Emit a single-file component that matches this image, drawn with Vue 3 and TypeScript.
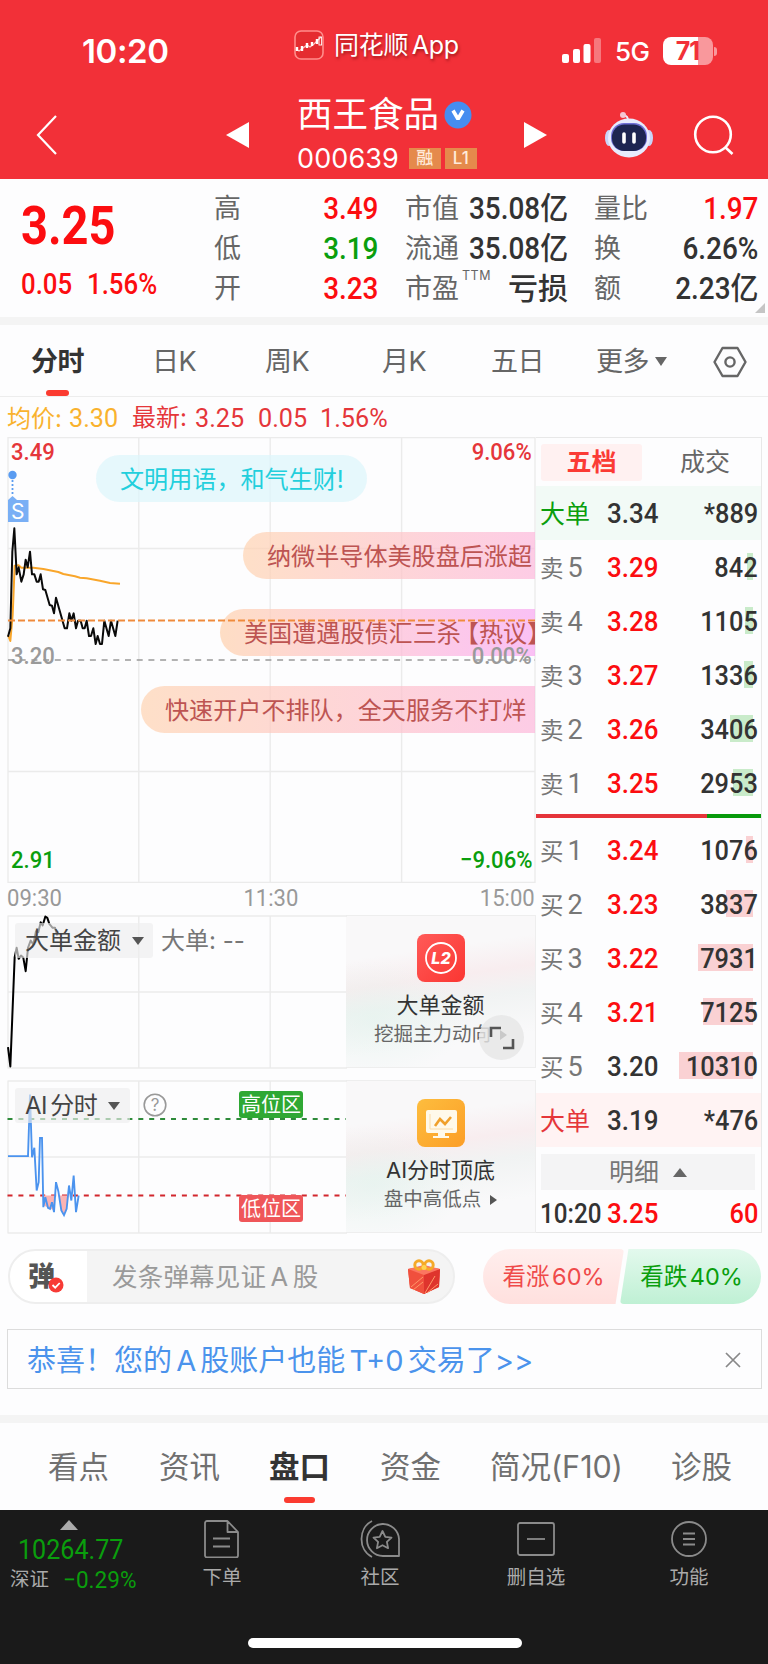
<script setup lang="ts">
interface Level { side: string; n: number; price: string; vol: string; bar: number; flat?: boolean }

const asks: Level[] = [
  { side: '卖', n: 5, price: '3.29', vol: '842', bar: 6 },
  { side: '卖', n: 4, price: '3.28', vol: '1105', bar: 8 },
  { side: '卖', n: 3, price: '3.27', vol: '1336', bar: 9 },
  { side: '卖', n: 2, price: '3.26', vol: '3406', bar: 23 },
  { side: '卖', n: 1, price: '3.25', vol: '2953', bar: 20 },
]
const bids: Level[] = [
  { side: '买', n: 1, price: '3.24', vol: '1076', bar: 7 },
  { side: '买', n: 2, price: '3.23', vol: '3837', bar: 27 },
  { side: '买', n: 3, price: '3.22', vol: '7931', bar: 55 },
  { side: '买', n: 4, price: '3.21', vol: '7125', bar: 50 },
  { side: '买', n: 5, price: '3.20', vol: '10310', bar: 74, flat: true },
]
const periods: string[] = ['分时', '日K', '周K', '月K', '五日']
const sections: string[] = ['看点', '资讯', '盘口', '资金', '简况(F10)', '诊股']

const priceLine = '24,605 31,580 37,350 43,280 50,418 56,397 64,440 71,418 77,374 83,397 90,350 96,418 103,418 110,440 116,440 122,418 129,463 136,465 149,510 156,512 162,535 168,488 194,580 201,580 208,535 214,557 221,535 228,580 234,557 242,557 248,580 254,580 260,557 267,603 273,603 280,580 287,627 293,603 300,627 306,627 313,557 326,603 333,557 346,603 353,557'
const avgLine = '24,600 31,618 38,540 44,392 56,391 64,398 100,398 130,402 160,408 175,411 190,417 225,424 240,428 260,430 300,437 330,444 360,446'
const bigLine = '24,920 31,978 44,650 50,622 56,655 63,645 70,652 77,692 84,622 92,600 100,612 108,572 115,575 122,545 128,555 136,528 142,532 148,550 158,562 165,562 172,585'
const aiLine = '24,1247 84,1247 90,1062 96,1250 103,1222 110,1350 116,1325 120,1192 126,1192 130,1400 136,1370 144,1402 150,1405 156,1385 162,1415 168,1325 175,1352 184,1410 192,1424 200,1405 207,1335 214,1380 221,1305 228,1415 236,1365'
</script>

<template>
  <div class="page">
    <header class="head">
      <div class="status">
        <span class="clock">10:20</span>
        <span class="appname">
          <svg class="logo" width="30" height="30" viewBox="0 0 30 30"><rect x="1" y="1" width="28" height="28" rx="6" fill="#e52c30" stroke="#ff8d8b" stroke-width="1.6" /><path d="M2 19l3 2 4-3 4-3 3 2 4-3 4-4 3-3" fill="none" stroke="#ffc5c0" stroke-width="1.2" /><path d="M3 17v4M8 16v5M13 13v5M18 12v4M23 9v5" stroke="#fff" stroke-width="2.4" /><rect x="25" y="7" width="2.6" height="8" fill="none" stroke="#fff" stroke-width=".9" /></svg>
          <span>同花顺 App</span>
        </span>
        <span class="radio">
          <svg width="40" height="26" viewBox="0 0 40 26" fill="#fff"><rect x="0" y="16" width="7" height="9" rx="2" /><rect x="11" y="11" width="7" height="14" rx="2" /><rect x="21.500" y="6" width="7" height="19" rx="2" /><rect x="32" y="0" width="7" height="25" rx="2" opacity=".35" /></svg>
          <span class="net">5G</span>
          <span class="battery">71</span><i class="cap"></i>
        </span>
      </div>
      <div class="nav">
        <svg class="back" width="24" height="42" viewBox="0 0 24 42"><path d="M21 2L3 21l18 19" fill="none" stroke="#fff" stroke-width="2.200" /></svg>
        <svg class="prev" width="23" height="26" viewBox="0 0 23 26"><path d="M23 0v26L0 13z" fill="#fff" /></svg>
        <div class="title">
          <div class="name">西王食品
            <svg width="28" height="28" viewBox="0 0 28 28"><circle cx="14" cy="14" r="13.500" fill="#468df0" /><path d="M9 9.500l5 8.500 5-8.500" fill="none" stroke="#fff" stroke-width="3.600" stroke-linejoin="bevel" /></svg>
          </div>
          <div class="code">000639<span class="tag rong">融</span><span class="tag">L1</span></div>
        </div>
        <svg class="next" width="23" height="26" viewBox="0 0 23 26"><path d="M0 0v26l23-13z" fill="#fff" /></svg>
        <svg class="robot" width="50" height="48" viewBox="0 0 50 48">
          <path d="M24 10c0-4-1-5-5-6" fill="none" stroke="#e9ecfb" stroke-width="2" /><circle cx="19" cy="4" r="3" fill="#f5c6d3" />
          <ellipse cx="5" cy="27" rx="4" ry="8" fill="#c9d4f8" /><ellipse cx="45" cy="27" rx="4" ry="8" fill="#c9d4f8" />
          <ellipse cx="25" cy="27" rx="21" ry="19.500" fill="#e7ebfd" /><rect x="7" y="12" width="36" height="28" rx="13" fill="#6f6fd6" /><rect x="8" y="13.500" width="34" height="26.500" rx="12.500" fill="#1d2551" />
          <path d="M20 23v8M30 23v8" stroke="#fff" stroke-width="3.600" stroke-linecap="round" />
        </svg>
        <svg class="search" width="42" height="42" viewBox="0 0 42 42" fill="none" stroke="#fff" stroke-width="2.600"><circle cx="20" cy="19.500" r="17.800" /><path d="M32 32l7.500 7" /></svg>
      </div>
    </header>

    <section class="quote">
      <div class="last">
        <b class="n">3.25</b>
        <div class="chg"><span class="n">0.05</span><span class="n">1.56%</span></div>
      </div>
      <div class="facts">
        <span>高</span><em class="n r up">3.49</em><span>市值</span><em class="n r">35.08亿</em><span>量比</span><em class="n r up">1.97</em>
        <span>低</span><em class="n r down">3.19</em><span>流通</span><em class="n r">35.08亿</em><span>换</span><em class="n r">6.26%</em>
        <span>开</span><em class="n r up">3.23</em><span>市盈<sup>TTM</sup></span><em class="r cjk">亏损</em><span>额</span><em class="n r">2.23亿</em>
      </div>
      <i class="corner"></i>
    </section>

    <nav class="periods">
      <span v-for="(p, i) in periods" :key="p" :class="{ on: i === 0 }">{{ p }}</span>
      <span class="more">更多<i></i></span>
      <svg width="34" height="32" viewBox="0 0 34 32" fill="none" stroke="#666" stroke-width="2.400" stroke-linejoin="round"><path d="M9.500 2h15L32.500 16l-8 14h-15L1.500 16z" /><circle cx="17" cy="16" r="4.600" /></svg>
    </nav>

    <div class="legend"><span class="avg">均价: <span class="n">3.30</span></span><span>最新:</span><span class="n">3.25</span><span class="n">0.05</span><span class="n">1.56%</span></div>

    <main class="board">
      <div class="charts">
        <div class="main-chart">
          <svg class="plot" width="529" height="446" viewBox="7 437 529 446" fill="none">
            <path d="M8 437.500H535.500M8 548.500H535M8 771.500H535M8 882.500H535M8 437v446M138.800 437v446M270.200 437v446M401.600 437v446M535 437v446" stroke="#ebebeb" stroke-width="1.400" />
            <path d="M8 660H535" stroke="#999" stroke-width="1.500" stroke-dasharray="6 5.700" />
          </svg>
          <div class="pill p1">文明用语，和气生财!</div>
          <div class="pill p2">纳微半导体美股盘后涨超</div>
          <div class="pill p3">美国遭遇股债汇三杀<span>【热议】</span></div>
          <div class="pill p4">快速开户不排队，全天服务不打烊</div>
          <svg class="plot" width="529" height="446" viewBox="7 437 529 446" fill="none">
            <g transform="translate(0 435) scale(.33333)" stroke-width="6" stroke-linejoin="round"><polyline :points="avgLine" stroke="#f9a62b" /><polyline :points="priceLine" stroke="#0a0a0a" /></g>
            <path d="M8 620.500H535" stroke="#f08b3c" stroke-width="1.900" stroke-dasharray="7 3" />
            <circle cx="12.500" cy="475" r="4.200" fill="#5a9cf1" /><path d="M12.500 480v15" stroke="#5a9cf1" stroke-width="1.800" stroke-dasharray="2 2" /><path d="M8 500l4.500-4 4.500 4h11.500v22H8z" fill="#79aff5" />
          </svg>
          <span class="s">S</span>
          <span class="n ax tl up2">3.49</span><span class="n ax tr up2">9.06%</span>
          <span class="n ax ml">3.20</span><span class="n ax mr">0.00%</span>
          <span class="n ax bl">2.91</span><span class="n ax br">−9.06%</span>
        </div>
        <div class="times"><span class="n">09:30</span><span class="n">11:30</span><span class="n">15:00</span></div>

        <div class="sub">
          <svg class="plot" width="340" height="154" viewBox="7 914.500 340 154" fill="none">
            <path d="M8 915.500H347M8 991.500H346M8 1067.500H347M8 915v153M138.800 915v153M270.200 915v153" stroke="#ebebeb" stroke-width="1.400" />
            <polyline transform="translate(0 740) scale(.33333)" :points="bigLine" stroke="#000" stroke-width="6" stroke-linejoin="round" />
          </svg>
          <span class="pick">大单金额<i></i></span><span class="note">大单: --</span>
          <div class="promo">
            <svg width="48" height="48" viewBox="0 0 48 48"><defs><linearGradient id="lr" x2="1" y2="1"><stop stop-color="#ff5a58" /><stop offset="1" stop-color="#fb3632" /></linearGradient></defs><rect width="48" height="48" rx="8" fill="url(#lr)" /><circle cx="24" cy="24" r="15" fill="none" stroke="#fff" stroke-width="1.800" /><text x="24" y="30" text-anchor="middle" class="l2">L2</text></svg>
            <b>大单金额</b><small>挖掘主力动向<i></i></small>
          </div>
          <span class="expand"><svg width="26" height="24" viewBox="0 0 26 24" fill="none" stroke="#555" stroke-width="2.600"><path d="M2 11V2h10M24 13v9H14" /></svg></span>
        </div>

        <div class="sub second">
          <svg class="plot" width="340" height="154" viewBox="7 1079.500 340 154" fill="none">
            <path d="M8 1080.500H347M8 1156.500H346M8 1232.500H347M8 1080v153M138.800 1080v153M270.200 1080v153" stroke="#ebebeb" stroke-width="1.400" />
            <path d="M7.500 1118.400H346" stroke="#2e8b3a" stroke-width="2" stroke-dasharray="5 5.900" /><path d="M7.500 1195H346" stroke="#d2272d" stroke-width="2" stroke-dasharray="5 5.900" />
            <g transform="translate(0 740) scale(.33333)"><path d="M128 1365l4 30 12 7 8 3 10 5 2-45zM176 1365l8 45 8 14 8-19 6-40z" fill="#fbb3b3" /><polyline :points="aiLine" stroke="#4b93ee" stroke-width="5.600" /></g>
          </svg>
          <span class="pick ai">AI 分时<i></i></span>
          <svg class="help" width="24" height="24" viewBox="0 0 24 24"><circle cx="12" cy="12" r="10.800" fill="none" stroke="#999" stroke-width="1.600" /><text x="12" y="18" text-anchor="middle">?</text></svg>
          <span class="zone hi">高位区</span><span class="zone lo">低位区</span>
          <div class="promo">
            <svg width="48" height="48" viewBox="0 0 48 48"><defs><linearGradient id="lo" x2="1" y2="1"><stop stop-color="#fdbd3e" /><stop offset="1" stop-color="#fc9e27" /></linearGradient></defs><rect width="48" height="48" rx="8" fill="url(#lo)" /><rect x="9" y="11" width="31" height="23" rx="2" fill="#fff9ea" /><path d="M21 34h7v3h4v2H16v-2h5z" fill="#fff9ea" /><path d="M13 15v15h23" fill="none" stroke="#fbdca8" /><path d="M18 27l5-7 5 5 6-7" fill="none" stroke="#f0a02b" stroke-width="2.600" /></svg>
            <b>AI分时顶底</b><small>盘中高低点<i></i></small>
          </div>
        </div>
      </div>

      <aside class="book">
        <div class="btabs"><b>五档</b><span>成交</span></div>
        <div class="row big g"><span class="who">大单</span><em class="n">3.34</em><em class="n r">*889</em></div>
        <div v-for="l in asks" :key="'a' + l.n" class="row"><span class="who">{{ l.side }}<u>{{ l.n }}</u></span><em class="n up">{{ l.price }}</em><em class="n r">{{ l.vol }}</em><i class="bar gb" :style="{ width: l.bar + 'px' }"></i></div>
        <div class="ratio"><i></i></div>
        <div v-for="l in bids" :key="'b' + l.n" class="row"><span class="who">{{ l.side }}<u>{{ l.n }}</u></span><em class="n" :class="{ up: !l.flat }">{{ l.price }}</em><em class="n r">{{ l.vol }}</em><i class="bar rb" :style="{ width: l.bar + 'px' }"></i></div>
        <div class="row big p"><span class="who">大单</span><em class="n">3.19</em><em class="n r">*476</em></div>
        <div class="detail">明细<i></i></div>
        <div class="row tick"><em class="n at">10:20</em><em class="n up">3.25</em><em class="n r up">60</em></div>
      </aside>
    </main>

    <section class="social">
      <div class="talk">
        <span class="dan">弹<svg width="16" height="16" viewBox="0 0 16 16"><circle cx="8" cy="8" r="7.500" fill="#f73b36" /><path d="M4.500 8l2.700 2.700L11.700 6" fill="none" stroke="#fff" stroke-width="1.800" /></svg></span>
        <span class="hint">发条弹幕见证 A 股</span>
        <svg class="gift" width="32" height="36" viewBox="0 0 32 36"><path d="M0 10l16-3 16 3-1 18-15 7L2 29z" fill="#ee4738" /><path d="M0 10l16 5v20L2 29z" fill="#f0503d" /><path d="M16 15l16-5-1 18-15 7z" fill="#df342d" /><path d="M0 10l16-4 16 4-16 6z" fill="#fb7660" /><path d="M3 28l12-10M5 31l10-8M17 34l10-17M19 34l11-9" stroke="#ff9868" stroke-width="1" /><g fill="none" stroke="#f5a928" stroke-width="3"><circle cx="11" cy="6" r="4.200" /><circle cx="21" cy="6" r="4.200" /></g><circle cx="16" cy="8.500" r="2.500" fill="#ffd34f" /></svg>
      </div>
      <div class="votes"><span class="bull">看涨 60%</span><span class="bear">看跌 40%</span></div>
    </section>

    <div class="notice"><span>恭喜！您的 A 股账户也能 T+0 交易了&gt;&gt;</span><svg width="16" height="16" viewBox="0 0 16 16"><path d="M1 1l14 14M15 1L1 15" stroke="#888" stroke-width="1.700" /></svg></div>

    <nav class="sections"><span v-for="s in sections" :key="s" :class="{ on: s === '盘口' }">{{ s }}</span></nav>

    <footer class="foot">
      <div class="index"><i></i><b class="n">10264.77</b><div><span>深证</span><em class="n">−0.29%</em></div></div>
      <div class="act"><svg width="40" height="38" viewBox="0 0 40 38"><path d="M5 1h20.500L36 12v23.500a2 2 0 0 1-2 2H5a2 2 0 0 1-2-2V3a2 2 0 0 1 2-2zM25.500 1v11H36M11 18.500h17M11 26.500h17" /></svg>下单</div>
      <div class="act"><svg width="42" height="38" viewBox="0 0 42 38"><path d="M13 1C-1 8-1 30 13 37M40 36V19A16 16 0 1 0 24 36zM23.500 11l2.800 5.800 6.200.8-4.600 4.300 1.200 6.300-5.600-3-5.600 3 1.200-6.300-4.600-4.300 6.200-.8z" /></svg>社区</div>
      <div class="act"><svg width="40" height="38" viewBox="0 0 40 38"><rect x="2" y="3" width="36" height="32" rx="2" /><path d="M11 19h18" /></svg>删自选</div>
      <div class="act"><svg width="40" height="38" viewBox="0 0 40 38"><circle cx="20" cy="19" r="17" /><path d="M14 13.500h12M14 19h12M14 24.500h12" /></svg>功能</div>
      <i class="home"></i>
    </footer>
  </div>
</template>

<style>
body { margin: 0; background: #fff; }
</style>

<style scoped>
* { box-sizing: border-box; }
i, em { font-style: normal; }
svg { display: block; flex: none; }
.page { width: 768px; height: 1664px; overflow: hidden; background: #fdfdfe; font-family: Inter, "Noto Sans CJK SC", sans-serif; color: #666; line-height: 1; white-space: nowrap; }
.n { display: inline-block; font-family: Roboto, "Noto Sans CJK SC", sans-serif; font-weight: 500; transform: scaleX(.91); transform-origin: left center; }
.r { justify-self: end; transform-origin: right center; }
.up { color: #fc0d10 !important; }
.down { color: #0a9e0d !important; }

.head { height: 179px; background: #f23038; color: #fff; }
.status { height: 90px; display: flex; position: relative; }
.clock { width: 212px; margin: 35px 0 0 82px; font-size: 33px; font-weight: 600; letter-spacing: -.4px; }
.appname { width: 268px; height: 30px; margin-top: 30px; display: flex; align-items: center; gap: 10px; font-size: 25px; letter-spacing: -.3px; word-spacing: -3px; text-shadow: 1px 2px 3px rgba(80, 0, 0, .5); }
.radio { height: 28px; margin-top: 37px; display: flex; align-items: center; }
.net { margin-left: 13px; width: 48px; padding-top: 2px; font-size: 26px; font-weight: 500; letter-spacing: -.5px; }
.battery { width: 50px; height: 28px; border-radius: 8px; background: linear-gradient(90deg, #fff 71%, #f9989c 71%); color: #f23038; font-size: 25px; font-weight: 700; line-height: 28px; text-align: center; letter-spacing: -1px; padding-right: 1px; }
.cap { width: 3px; height: 9px; margin-left: 1px; border-radius: 0 3px 3px 0; background: #f9989c; }
.nav { display: flex; height: 89px; }
.back { margin: 24px 0 0 35px; }
.prev { margin: 32px 0 0 167px; }
.title { width: 227px; margin-left: 48px; }
.name { display: flex; align-items: center; gap: 5px; height: 44px; margin-top: 3px; font-size: 35.500px; }
.code { display: flex; align-items: center; height: 28px; margin-top: 7px; font-size: 27px; letter-spacing: .1px; }
.tag { width: 32px; height: 21px; margin-left: 4px; background: #e58a4c; color: #ffeada; font-size: 17px; line-height: 21px; text-align: center; font-weight: 500; }
.rong { margin-left: 10px; }
.next { margin: 32px 0 0; }
.robot { margin: 21px 0 0 57px; }
.search { margin: 25px 0 0 39px; }

.quote { height: 146px; display: flex; position: relative; border-bottom: 8px solid #f4f4f4; }
.last { width: 214px; padding: 20px 0 0 21px; color: #fc0d10; }
.last > b { font-size: 54px; font-weight: 700; transform: scaleX(.87); height: 54px; }
.chg { display: flex; margin-top: 17px; font-size: 29px; }
.chg .n { width: 66px; transform: scaleX(.89); }
.facts { display: grid; grid-template-columns: 27px 137px 80px 110px 80px 110px; grid-template-rows: 40px 40px 40px; align-items: center; padding-top: 9px; font-size: 27px; }
.facts span:nth-of-type(3n+2) { padding-left: 27px; }
.facts span:nth-of-type(3n) { padding-left: 26px; }
.facts em { color: #333; font-size: 31px; }
.facts .n { transform: scaleX(.9); }
.facts .cjk { font-size: 30px; font-weight: 500; }
.facts sup { position: absolute; margin-top: -5px; margin-left: 3px; font-size: 12.500px; letter-spacing: .5px; }
.corner { position: absolute; right: 3px; bottom: 4px; border-left: 10px solid transparent; border-bottom: 10px solid #c5c5c5; }

.periods { height: 72px; padding: 2px 0 0 31px; display: grid; grid-template-columns: 121px 113px 117px 109px 105px 116px 40px; align-items: center; border-bottom: 1px solid #ededed; font-size: 27px; letter-spacing: -.4px; }
.periods span { position: relative; }
.periods svg { margin-left: 1px; }
.periods .on, .sections .on { color: #333; font-weight: 700; }
.periods .on::after { content: ""; position: absolute; left: 15px; top: 42px; width: 23px; height: 6px; border-radius: 3px; background: #fb3b30; }
.more { display: flex; align-items: center; }
.more i { margin-left: 6px; border: 6.500px solid transparent; border-top: 9px solid #666; border-bottom: 0; }

.legend { height: 40px; padding: 1px 0 0 7px; display: flex; align-items: center; font-size: 24px; color: #e5363a; }
.legend .n { font-size: 26px; font-weight: 400; width: 62.500px; transform: scaleX(.97); }
.legend .avg { width: 125px; color: #f9b22e; }
.legend > span:nth-child(2) { width: 63px; }

.board { height: 796px; margin-left: 7px; display: flex; }
.charts { width: 529px; }
.main-chart { position: relative; height: 446px; overflow: hidden; }
.plot { position: absolute; left: 0; top: 0; }
.pill { position: absolute; height: 47px; line-height: 49px; font-size: 24.100px; padding-left: 24px; border-radius: 24px 0 0 24px; color: #bd5452; right: 1px; overflow: hidden; background: linear-gradient(90deg, rgba(255, 211, 177, .7), rgba(253, 183, 219, .7)); }
.p1 { left: 89px; right: auto; width: 271px; top: 18px; border-radius: 24px; color: #23cfdc; background: rgba(222, 246, 251, .75); }
.p2 { left: 236px; top: 95px; }
.p3 { left: 213px; top: 172px; background: linear-gradient(90deg, rgba(255, 211, 177, .75), rgba(253, 183, 219, .7) 65%, rgba(248, 160, 240, .65)); }
.p3 span { margin-left: -6px; }
.p4 { left: 134px; top: 249px; }
.s { position: absolute; left: 4px; top: 64px; font-size: 21px; color: #fff; }
.ax { position: absolute; font-size: 24.500px; color: #999; transform: scaleX(.9); }
.up2 { color: #e5363a; }
.tl, .ml, .bl { left: 4px; }
.tr, .mr, .br { right: 4px; transform-origin: right center; }
.tl, .tr { top: 3px; }
.ml, .mr { top: 207px; color: #9a9a9a; }
.bl, .br { top: 411px; color: #0a9e0d; }
.times { height: 32px; display: flex; justify-content: space-between; align-items: center; font-size: 24px; color: #999; }
.times .n { font-weight: 400; transform: scaleX(.92); padding-bottom: 3px; }
.times .n:nth-child(2) { transform-origin: center; margin-left: -1px; }
.times .n:last-child { transform-origin: right; margin-right: 1px; }
.sub { position: relative; height: 153px; display: flex; justify-content: flex-end; }
.second { margin-top: 12px; }
.pick { position: absolute; left: 8px; top: 8px; width: 138px; height: 35px; padding: 1px 0 0 10px; display: flex; align-items: center; background: rgba(238, 238, 238, .65); border-radius: 3px; color: #444; font-size: 24px; }
.pick i { margin-left: 11px; border: 6.500px solid transparent; border-top: 8px solid #555; border-bottom: 0; }
.pick.ai { width: 115px; letter-spacing: -.5px; word-spacing: -3px; }
.note { position: absolute; left: 154px; top: 14px; font-size: 24px; color: #777; }
.help { position: absolute; left: 136px; top: 13px; }
.help text { font-size: 17px; fill: #999; }
.zone { position: absolute; left: 232px; width: 64px; height: 27px; line-height: 29px; border-radius: 3px; text-align: center; color: #fff; font-size: 20px; }
.hi { top: 11px; background: #2fa834; }
.lo { top: 115px; background: #ef5659; }
.promo { width: 190px; height: 153px; padding-top: 18px; display: flex; flex-direction: column; align-items: center; border: 1px solid #eee; border-left: 0; background: radial-gradient(ellipse at 15% 68%, rgba(225, 243, 236, .55), transparent 40%), linear-gradient(172deg, #f9f8f9 25%, #f8edef 42%, #f1f3f3 56%, #f9f9fa 80%); }
.promo b { margin-top: 12px; font-size: 22px; font-weight: 400; color: #333; }
.promo small { display: flex; align-items: center; margin-top: 9px; font-size: 19.500px; }
.promo small i { margin-left: 9px; border: 5px solid transparent; border-left: 7px solid #555; border-right: 0; }
.l2 { font-size: 16px; font-weight: 800; font-style: italic; fill: #fff; }
.expand { position: absolute; left: 472px; top: 100px; width: 45px; height: 45px; border-radius: 50%; background: rgba(230, 230, 230, .8); display: flex; align-items: center; justify-content: center; }

.book { width: 226px; border: 1px solid #e8e8e8; border-left: 0; font-size: 25px; }
.btabs { height: 48px; display: flex; align-items: center; padding-left: 5px; }
.btabs b { width: 101px; height: 37px; line-height: 36px; text-align: center; background: #fff1f1; color: #fb3b35; border-radius: 3px; }
.btabs span { margin-left: 38px; font-size: 25px; }
.row { position: relative; height: 54px; display: grid; grid-template-columns: 67px 60px 91px; align-items: center; padding: 2px 0 0 4px; }
.row em { position: relative; z-index: 1; font-size: 28.500px; color: #333; }
.row .r { transform: scaleX(.89); }
.who { font-size: 23.500px; color: #777; }
.who u { text-decoration: none; font-size: 27px; margin-left: 4px; font-family: Roboto; }
.big .who { font-size: 25px; }
.g { background: #f2faf6; }
.g .who { color: #0a9e0d; }
.p { background: #fff3f3; }
.p .who { color: #e5363a; }
.bar { position: absolute; right: 8px; top: 13px; height: 27px; }
.gb { background: #c9ebca; }
.rb { background: #fad1d3; }
.ratio { height: 4px; margin: 4px 0 5px; background: #089a0b; }
.ratio i { display: block; width: 171px; height: 4px; background: #e5343a; }
.detail { height: 36px; margin: 7px 6px 0 5px; background: #f4f4f5; color: #777; display: flex; align-items: center; justify-content: center; }
.detail i { margin-left: 14px; border: 7px solid transparent; border-bottom: 9px solid #666; border-top: 0; }
.tick { height: 41px; padding-top: 8px; }
.tick .at { transform: scaleX(.85); }

.social { height: 55px; margin: 16px 7px 0 8px; display: flex; justify-content: space-between; }
.talk { width: 447px; height: 55px; border: 2px solid #eee; border-radius: 28px; overflow: hidden; display: flex; align-items: center; background: linear-gradient(90deg, #fff 77px, #f4f4f4 77px); }
.dan { position: relative; width: 102px; padding-left: 18px; font-size: 27px; font-weight: 900; color: #555; }
.dan svg { position: absolute; left: 38px; top: 14px; }
.hint { width: 296px; padding-top: 1px; font-size: 25.500px; letter-spacing: .2px; word-spacing: -3px; color: #9a9a9a; }
.votes { width: 278px; display: flex; font-size: 23.500px; line-height: 56px; text-align: center; word-spacing: -4px; }
.bull { width: 141px; padding-left: 0; border-radius: 28px 4px 4px 28px; color: #ef4a4a; background: linear-gradient(#ffeeed, #ffe0de); clip-path: polygon(0 0, 100% 0, 94% 100%, 0 100%); }
.bear { width: 141px; margin-left: -4px; padding-left: 2px; border-radius: 4px 28px 28px 4px; color: #0a9e0d; background: linear-gradient(#e3f9ed, #bff0d4); clip-path: polygon(6% 0, 100% 0, 100% 100%, 0 100%); }

.notice { height: 60px; margin: 25px 6px 0 7px; padding: 2px 20px 0 19px; display: flex; align-items: center; justify-content: space-between; border: 1px solid #dcdcdc; color: #4b93ec; font-size: 29px; word-spacing: -4px; }
.sections { height: 95px; margin-top: 26px; padding: 2px 0 0 48px; border-top: 8px solid #f4f4f4; display: grid; grid-template-columns: 111px 110px 111px 110px 181px 90px; align-items: center; font-size: 30.500px; color: #707070; }
.sections span { position: relative; }
.sections .on::after { content: ""; position: absolute; left: 15px; top: 45px; width: 31px; height: 6px; border-radius: 3px; background: #fb3b30; }

.foot { position: relative; height: 154px; background: #1a1a1a; display: grid; grid-template-columns: 146px 152px 164px 148px 158px; color: #aaa; font-size: 19.500px; }
.index { padding: 10px 0 0 10px; }
.index > i { display: block; width: 0; margin-left: 50px; border: 9px solid transparent; border-bottom: 10px solid #aaa; border-top: 0; }
.index b { display: block; height: 34px; line-height: 40px; margin-left: 8px; font-size: 27px; font-weight: 400; color: #0a9e0d; transform: scaleX(.93); }
.index div { display: flex; align-items: center; }
.index em { margin-left: 14px; font-size: 24px; line-height: 32px; font-weight: 400; color: #0a9e0d; transform: scaleX(.94); }
.act { display: flex; flex-direction: column; align-items: center; padding-top: 10px; gap: 10px; }
.act svg { fill: none; stroke: #8b8b8b; stroke-width: 1.800; stroke-linejoin: round; }
.home { position: absolute; left: 248px; top: 128px; width: 274px; height: 10px; border-radius: 5px; background: #fff; }
</style>
